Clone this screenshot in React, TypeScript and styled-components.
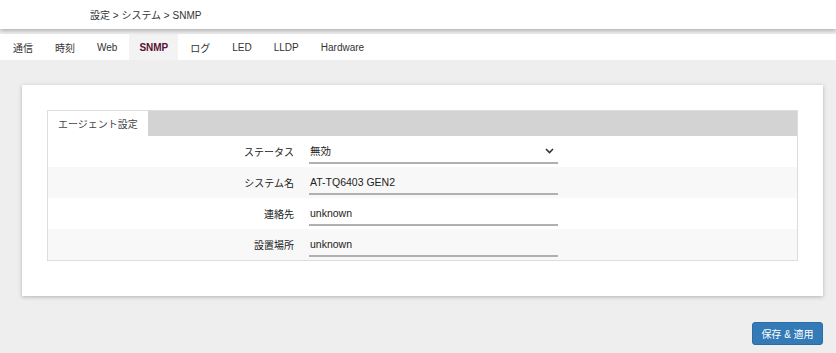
import styled, { createGlobalStyle } from 'styled-components'

const GlobalStyle = createGlobalStyle`
  html, body {
    margin: 0;
    padding: 0;
    background: #eeeeee;
    font-family: 'Liberation Sans', 'Noto Sans CJK JP', sans-serif;
    color: #333333;
  }
  * {
    box-sizing: border-box;
  }
`

const Page = styled.div`
  width: 836px;
  height: 353px;
  overflow: hidden;
  background: #eeeeee;
  display: flex;
  flex-direction: column;
`

const TopBar = styled.div`
  height: 29px;
  background: #ffffff;
  display: flex;
  align-items: center;
  padding-left: 90px;
  padding-bottom: 1px;
  font-size: 10px;
  color: #333333;
  box-shadow: 0 2px 4px rgba(0, 0, 0, 0.25);
  position: relative;
  z-index: 1;
`

const TabBar = styled.div`
  margin-top: 5px;
  height: 26px;
  background: #ffffff;
  display: flex;
  gap: 2px;
  padding-left: 3px;
`

const Tab = styled.div<{ $active?: boolean }>`
  padding: 0 10px;
  display: flex;
  align-items: center;
  font-size: 10px;
  font-weight: ${(p) => (p.$active ? 700 : 400)};
  color: ${(p) => (p.$active ? '#5a1232' : '#333333')};
  background: ${(p) => (p.$active ? '#f3f3f3' : 'transparent')};
`

const Body = styled.div`
  padding: 25px 13px 0 22px;
  display: flex;
  flex-direction: column;
`

const Card = styled.div`
  background: #ffffff;
  padding: 25px 25px 35px 25px;
  box-shadow: 0 1px 4px rgba(0, 0, 0, 0.25);
`

const Panel = styled.div`
  border: 1px solid #dddddd;
`

const PanelHead = styled.div`
  height: 25px;
  background: #d3d3d3;
  display: flex;
`

const PanelTab = styled.div`
  width: 100px;
  background: #ffffff;
  display: flex;
  align-items: center;
  padding-left: 10px;
  font-size: 10px;
  color: #444444;
`

const Row = styled.div<{ $alt?: boolean }>`
  height: 31px;
  display: grid;
  grid-template-columns: 246px 249px;
  column-gap: 15px;
  align-items: center;
  background: ${(p) => (p.$alt ? '#f8f8f8' : '#ffffff')};
`

const Label = styled.div`
  text-align: right;
  font-size: 10px;
  color: #222222;
  padding-bottom: 1px;
`

const Field = styled.div`
  height: 22px;
  margin-top: 2px;
  border-bottom: 2px solid #b0b0b0;
  display: flex;
  align-items: center;
  justify-content: space-between;
  padding-left: 1px;
  padding-right: 4px;
  padding-bottom: 2px;
  font-size: 10.5px;
  color: #222222;
`

const Chevron = styled.svg`
  width: 9px;
  height: 6px;
`

const Footer = styled.div`
  display: flex;
  justify-content: flex-end;
  padding-top: 26px;
`

const SaveButton = styled.div`
  width: 71px;
  height: 23px;
  background: #337ab7;
  border: 1px solid #2e6da4;
  border-radius: 3px;
  color: #ffffff;
  font-size: 10px;
  display: flex;
  align-items: center;
  justify-content: center;
`

const tabs = ['通信', '時刻', 'Web', 'SNMP', 'ログ', 'LED', 'LLDP', 'Hardware']

const rows = [
  { label: 'ステータス', value: '無効', select: true },
  { label: 'システム名', value: 'AT-TQ6403 GEN2' },
  { label: '連絡先', value: 'unknown' },
  { label: '設置場所', value: 'unknown' },
]

export default function App() {
  return (
    <Page>
      <GlobalStyle />
      <TopBar>設定 &gt; システム &gt; SNMP</TopBar>
      <TabBar>
        {tabs.map((t) => (
          <Tab key={t} $active={t === 'SNMP'}>
            {t}
          </Tab>
        ))}
      </TabBar>
      <Body>
        <Card>
          <Panel>
            <PanelHead>
              <PanelTab>エージェント設定</PanelTab>
            </PanelHead>
            {rows.map((r, i) => (
              <Row key={r.label} $alt={i % 2 === 1}>
                <Label>{r.label}</Label>
                <Field>
                  <span>{r.value}</span>
                  {r.select && (
                    <Chevron viewBox="0 0 9 6">
                      <path d="M1 1 L4.5 4.5 L8 1" fill="none" stroke="#333" strokeWidth="1.6" />
                    </Chevron>
                  )}
                </Field>
              </Row>
            ))}
          </Panel>
        </Card>
        <Footer>
          <SaveButton>保存 &amp; 適用</SaveButton>
        </Footer>
      </Body>
    </Page>
  )
}
